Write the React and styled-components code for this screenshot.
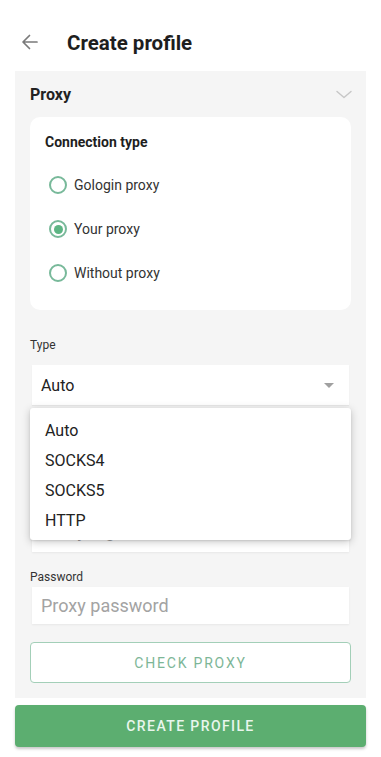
import React from "react";
import styled, { createGlobalStyle } from "styled-components";

const Global = createGlobalStyle`
  html, body { margin: 0; padding: 0; background: #fff; }
  body { font-family: Roboto, "Noto Sans", "Liberation Sans", sans-serif; color: #222; }
  * { box-sizing: border-box; }
`;

const Page = styled.div`
  width: 381px;
  min-height: 757px;
  padding: 0 15px;
  display: flex;
  flex-direction: column;
`;

const Header = styled.header`
  height: 71px;
  display: flex;
  align-items: center;
  padding-left: 6px;
  padding-top: 14px;
`;

const BackButton = styled.button`
  width: 18px;
  height: 18px;
  padding: 0;
  border: 0;
  background: none;
  display: flex;
  align-items: center;
  justify-content: center;
  margin-right: 28px;
  margin-top: -2px;
`;

const Title = styled.h1`
  margin: 0;
  font-size: 20.5px;
  font-weight: 700;
  color: #1e1e1e;
`;

const Panel = styled.section`
  background: #f5f5f5;
  padding: 0 15px 15px;
  display: flex;
  flex-direction: column;
`;

const SectionHeader = styled.div`
  height: 46px;
  display: flex;
  align-items: center;
  justify-content: space-between;
`;

const SectionTitle = styled.h2`
  margin: 0;
  font-size: 16px;
  font-weight: 700;
  color: #222;
`;

const Card = styled.div`
  background: #fff;
  border-radius: 10px;
  height: 193px;
  padding: 15px;
  display: flex;
  flex-direction: column;
`;

const CardTitle = styled.div`
  font-size: 14px;
  font-weight: 700;
  line-height: 20px;
  color: #1f1f1f;
  margin-bottom: 11px;
`;

const RadioRow = styled.label`
  height: 44px;
  display: flex;
  align-items: center;
  gap: 7px;
  padding-left: 4px;
  font-size: 14px;
  color: #333;
`;

const RadioCircle = styled.span`
  width: 18px;
  height: 18px;
  border-radius: 50%;
  border: 2px solid #78b99a;
  display: flex;
  align-items: center;
  justify-content: center;
  &::after {
    content: "";
    width: 9px;
    height: 9px;
    border-radius: 50%;
    background: ${(p) => (p.$checked ? "#5db584" : "transparent")};
  }
`;

const FieldLabel = styled.div`
  font-size: 12px;
  line-height: 14px;
  color: #333;
  margin-top: ${(p) => p.$top || 18}px;
  margin-bottom: ${(p) => p.$gap || 3}px;
`;

const SelectWrap = styled.div`
  position: relative;
  margin: 0 2px 3px;
`;

const Select = styled.div`
  height: 40px;
  background: #fff;
  display: flex;
  align-items: center;
  justify-content: space-between;
  padding: 0 15px 0 9px;
  font-size: 16px;
  color: #222;
  box-shadow: 0 1px 1px rgba(0, 0, 0, 0.05);
`;

const Caret = styled.span`
  width: 0;
  height: 0;
  border-left: 5px solid transparent;
  border-right: 5px solid transparent;
  border-top: 5px solid #a0a0a0;
`;

const Menu = styled.ul`
  position: absolute;
  top: 43px;
  left: -2px;
  right: -2px;
  margin: 0;
  padding: 7px 0 5px;
  list-style: none;
  background: #fff;
  border-radius: 3px;
  box-shadow: 0 2px 8px rgba(0, 0, 0, 0.22), 0 1px 2px rgba(0, 0, 0, 0.1);
  z-index: 2;
`;

const MenuItem = styled.li`
  height: 30px;
  display: flex;
  align-items: center;
  padding-left: 15px;
  font-size: 16px;
  color: #222;
`;

const Input = styled.input`
  height: 37px;
  margin: 0 2px;
  border: 0;
  outline: none;
  background: #fff;
  padding: 0 9px ${(p) => p.$lift || 0}px;
  font-family: inherit;
  font-size: 18px;
  color: #222;
  box-shadow: 0 1px 2px rgba(0, 0, 0, 0.06);
  &::placeholder { color: #a3a3a3; }
`;

const OutlineButton = styled.button`
  margin-top: 18px;
  height: 41px;
  border: 1.5px solid #a3cfb8;
  border-radius: 4px;
  background: #fff;
  font-family: inherit;
  font-size: 14px;
  letter-spacing: 1.8px;
  color: #7db697;
`;

const PrimaryButton = styled.button`
  margin-top: 7px;
  height: 42px;
  border: 0;
  border-radius: 4px;
  background: #5cae70;
  box-shadow: 0 2px 3px rgba(0, 0, 0, 0.22);
  font-family: inherit;
  font-size: 14px;
  font-weight: 500;
  letter-spacing: 1.4px;
  color: #e9f6ed;
`;

const BackIcon = () => (
  <svg width="18" height="18" viewBox="0 0 18 18" fill="none" stroke="#7a7a7a" strokeWidth="1.7" strokeLinecap="round" strokeLinejoin="round">
    <path d="M16 9H2.5M8.5 2.5L2 9l6.5 6.5" />
  </svg>
);

const ChevronIcon = () => (
  <svg width="16" height="9" viewBox="0 0 16 9" fill="none" stroke="#c6c6c6" strokeWidth="1.4" strokeLinecap="round" strokeLinejoin="round" style={{ marginRight: -1 }}>
    <path d="M1 1.5l7 6 7-6" />
  </svg>
);

const options = [
  { label: "Gologin proxy", checked: false },
  { label: "Your proxy", checked: true },
  { label: "Without proxy", checked: false },
];

const types = ["Auto", "SOCKS4", "SOCKS5", "HTTP"];

export default function App() {
  return (
    <>
      <Global />
      <Page>
        <Header>
          <BackButton aria-label="Back">
            <BackIcon />
          </BackButton>
          <Title>Create profile</Title>
        </Header>
        <Panel>
          <SectionHeader>
            <SectionTitle>Proxy</SectionTitle>
            <ChevronIcon />
          </SectionHeader>
          <Card>
            <CardTitle>Connection type</CardTitle>
            {options.map((o) => (
              <RadioRow key={o.label}>
                <RadioCircle $checked={o.checked} />
                {o.label}
              </RadioRow>
            ))}
          </Card>
          <FieldLabel $top={28} $gap={13}>Type</FieldLabel>
          <SelectWrap>
            <Select>
              Auto
              <Caret />
            </Select>
            <Menu>
              {types.map((t) => (
                <MenuItem key={t}>{t}</MenuItem>
              ))}
            </Menu>
          </SelectWrap>
          <FieldLabel>Host</FieldLabel>
          <Input placeholder="Proxy host" />
          <FieldLabel>Login</FieldLabel>
          <Input placeholder="Proxy login" $lift={6} />
          <FieldLabel>Password</FieldLabel>
          <Input placeholder="Proxy password" />
          <OutlineButton>CHECK PROXY</OutlineButton>
        </Panel>
        <PrimaryButton>CREATE PROFILE</PrimaryButton>
      </Page>
    </>
  );
}
